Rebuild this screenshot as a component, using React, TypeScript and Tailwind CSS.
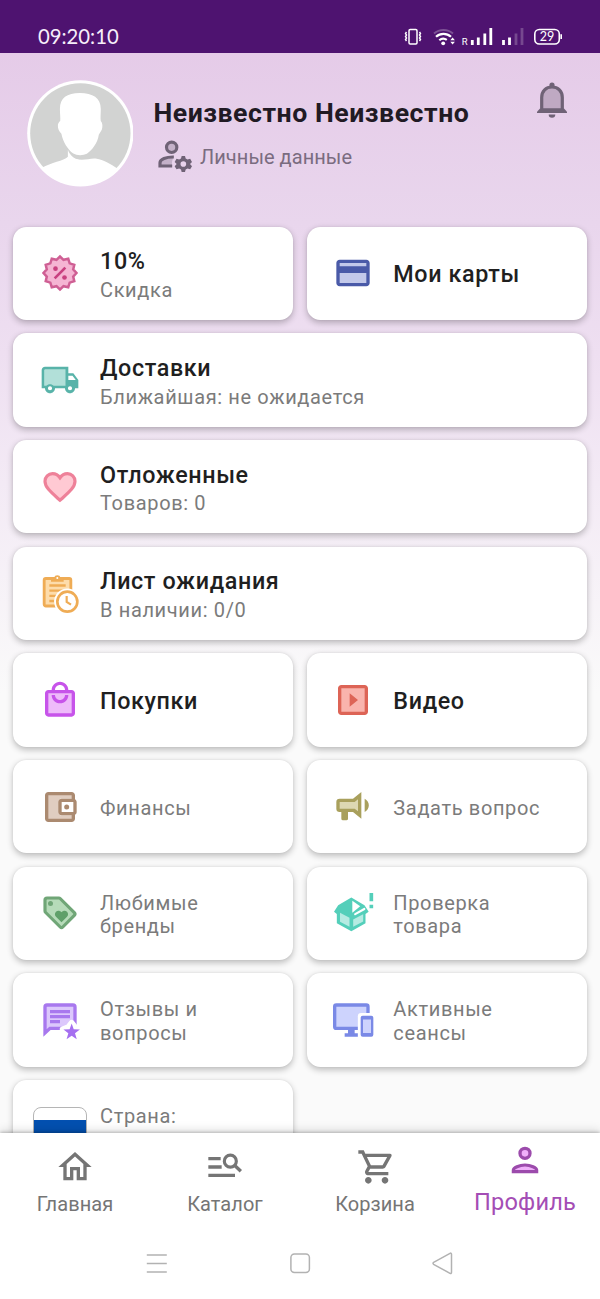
import type { ReactNode } from 'react';

type IconProps = { children: ReactNode; className?: string };

function Icon({ children, className = '' }: IconProps) {
  return (
    <svg viewBox="0 0 24 24" className={`h-10 w-10 shrink-0 overflow-visible ${className}`}>
      {children}
    </svg>
  );
}

function starPoints(cx: number, cy: number, tips: number, outer: number, inner: number, start: number) {
  return Array.from({ length: tips * 2 }, (_, i) => {
    const r = i % 2 ? inner : outer;
    const a = start + (i * Math.PI) / tips;
    return `${(cx + r * Math.cos(a)).toFixed(2)},${(cy + r * Math.sin(a)).toFixed(2)}`;
  }).join(' ');
}

const DiscountIcon = () => (
  <Icon>
    <polygon points={starPoints(12, 12, 12, 9.9, 8.2, 0)} fill="#f5b5d3" stroke="#cf5f94" strokeWidth="1.5" />
    <path d="M8.800 15.200l6.400-6.400" stroke="#c9407f" strokeWidth="1.600" />
    <circle cx="9.3" cy="9.4" r="1.4" fill="#c9407f" />
    <circle cx="14.7" cy="14.7" r="1.4" fill="#c9407f" />
  </Icon>
);

const CardIcon = () => (
  <Icon>
    <rect x="3" y="5" width="18" height="14" fill="#c3c9ea" />
    <path
      fill="#4a5aa8"
      d="M20 4H4c-1.11 0-1.99.89-1.99 2L2 18c0 1.11.89 2 2 2h16c1.11 0 2-.89 2-2V6c0-1.11-.89-2-2-2zm0 14H4v-6h16v6zm0-10H4V6h16v2z"
    />
  </Icon>
);

const TruckIcon = () => (
  <Icon>
    <path fill="#b2e0d9" d="M2 5h14v11H2z" />
    <path
      fill="#58b3a9"
      d="M20 8h-3V4H3c-1.1 0-2 .9-2 2v11h2c0 1.66 1.34 3 3 3s3-1.34 3-3h6c0 1.66 1.34 3 3 3s3-1.34 3-3h2v-5l-3-4zM3 5.500h12.300v10H8.220c-.55-.61-1.33-1-2.220-1s-1.670.39-2.220 1H2.500V6zm3 12.500c-.55 0-1-.45-1-1s.45-1 1-1 1 .45 1 1-.45 1-1 1zm12 0c-.55 0-1-.45-1-1s.45-1 1-1 1 .45 1 1-.45 1-1 1zm-1-6V9.500h2.500l1.960 2.500H17z"
    />
    <circle cx="6" cy="17" r="1.200" fill="#fff" />
    <circle cx="18" cy="17" r="1.200" fill="#fff" />
  </Icon>
);

const HeartIcon = () => (
  <Icon>
    <path
      fill="#ffc9d3"
      stroke="#ee8199"
      strokeWidth="1.9"
      d="M12 19.950l-1.200-1.050C6.200 14.800 3 12 3 8.500 3 6 5 4 7.500 4c1.750 0 3.500.99 4.500 2.450C13 4.990 14.750 4 16.500 4 19 4 21 6 21 8.500c0 3.500-3.200 6.300-7.800 10.400z"
    />
  </Icon>
);

const WaitlistIcon = () => (
  <Icon>
    <rect x="2.5" y="3.300" width="16" height="16.500" rx="1" fill="#fddcab" stroke="#efac55" strokeWidth="1.7" />
    <path d="M6.600 5.200V2.800h1.800a2.100 2.100 0 0 1 4 0h1.800v2.400z" fill="#efac55" />
    <circle cx="10.400" cy="3" r=".6" fill="#fff" />
    <path d="M5.600 7.500h9.800M5.600 10.600h9.800M5.600 13.700h4.400M5.600 16.800h2.800" stroke="#efac55" strokeWidth="1.400" />
    <circle cx="16.400" cy="17.200" r="7.900" fill="#fff" />
    <circle cx="16.400" cy="17.200" r="6" fill="#fff" stroke="#efac55" strokeWidth="1.600" />
    <path d="M16 13.800v3.500l2.600 1.700" fill="none" stroke="#efac55" strokeWidth="1.300" />
  </Icon>
);

const BagIcon = () => (
  <Icon>
    <path fill="#eebbfa" d="M4 7h16v14H4z" />
    <path
      fill="#c754ea"
      d="M19 6h-2c0-2.760-2.240-5-5-5S7 3.240 7 6H5c-1.100 0-1.990.9-1.990 2L3 20c0 1.100.9 2 2 2h14c1.100 0 2-.9 2-2V8c0-1.100-.9-2-2-2zm-7-3c1.660 0 3 1.340 3 3H9c0-1.660 1.340-3 3-3zm7 17H5V8h14v12zm-7-8c-1.660 0-3-1.340-3-3H7c0 2.760 2.240 5 5 5s5-2.240 5-5h-2c0 1.660-1.340 3-3 3z"
    />
  </Icon>
);

const VideoIcon = () => (
  <Icon>
    <rect x="4" y="4" width="16" height="16" fill="#f9b4ad" />
    <path
      fill="#dd6456"
      d="M10 8v8l5-4-5-4zm9-5H5c-1.100 0-2 .9-2 2v14c0 1.100.9 2 2 2h14c1.100 0 2-.9 2-2V5c0-1.100-.9-2-2-2zm0 16H5V5h14v14z"
    />
  </Icon>
);

const WalletIcon = () => (
  <Icon>
    <path fill="#e0cdc0" d="M4 4h16v3h-8v10h8v3H4z" />
    <path
      fill="#ab8a70"
      d="M21 7.280V5c0-1.100-.9-2-2-2H5c-1.110 0-2 .9-2 2v14c0 1.100.89 2 2 2h14c1.100 0 2-.9 2-2v-2.280c.59-.35 1-.98 1-1.720V9c0-.74-.41-1.370-1-1.720zM20 9v6h-7V9h7zM5 19V5h14v2h-6c-1.100 0-2 .9-2 2v6c0 1.100.9 2 2 2h6v2H5z"
    />
    <circle cx="16" cy="12" r="1.500" fill="#ab8a70" />
  </Icon>
);

const MegaphoneIcon = () => (
  <Icon>
    <g transform="translate(0 -1)">
      <path fill="#ddd8b2" d="M3 9h10l3-2v10l-3-2H3z" />
      <path
        fill="#a9a05c"
        d="M12 8H4a2 2 0 0 0-2 2v4a2 2 0 0 0 2 2h1v4a1 1 0 0 0 1 1h2a1 1 0 0 0 1-1v-4h3l5 4V4l-5 4m3 7.600L13 14H4v-4h9l2-1.600v7.200m6.500-3.600c0 1.710-.96 3.260-2.500 4V8c1.530.75 2.500 2.300 2.500 4z"
      />
    </g>
  </Icon>
);

const TagIcon = () => (
  <Icon>
    <path
      d="M3 4.200C3 3.500 3.500 3 4.200 3h7.100c.3 0 .6.100.8.300l8.500 8.500c.5.500.5 1.100 0 1.600l-6.900 7c-.5.500-1.100.500-1.600 0l-8.700-8.700c-.3-.3-.4-.6-.4-.9z"
      fill="#b6dbb9"
      stroke="#70a677"
      strokeWidth="1.900"
    />
    <circle cx="6.300" cy="6.300" r="1.500" fill="#70a677" />
    <path
      fill="#5fa069"
      d="M12.900 17.600l-3.300-3.300c-.8-.9-.9-2.200 0-3.100.9-.9 2.300-.8 3.300.3 1-1.100 2.400-1.200 3.300-.3.900.9.800 2.200 0 3.100z"
    />
  </Icon>
);

const InspectIcon = () => (
  <Icon>
    <path d="M11 2.700l7.900 4.600 2.500 4-1.900 1.300v5.600L11 22.900l-8.700-4.700v-5.600L.600 11.300l2.500-4z" fill="#54cfba" />
    <path d="M4.200 11.900l5.700 2.900v5.500l-5.700-3z" fill="#b5ebe2" />
    <path d="M12.100 17.800v-1.900l6-3.100v4.300l-6 3.200z" fill="#b5ebe2" />
    <path d="M11.600 4.600l4.700 3.300-4.700 3.900z" fill="#fff" />
    <path d="M13.300 12.700l5.500-3.100" stroke="#fff" strokeWidth="1.300" strokeLinecap="round" />
    <path d="M23 0v4.900M23 7v2.200" stroke="#54cfba" strokeWidth="2.200" />
  </Icon>
);

const ReviewsIcon = () => (
  <Icon>
    <path
      d="M3 4.200C3 3.500 3.500 3 4.200 3h15.600c.7 0 1.200.5 1.200 1.200V17H6l-3 2.800z"
      fill="#dcc8fc"
      stroke="#a878ee"
      strokeWidth="2"
    />
    <path d="M6 7h12M6 10h12M6 13h6" stroke="#a878ee" strokeWidth="1.900" />
    <polygon
      points={starPoints(19, 19.300, 5, 5.600, 3.600, -Math.PI / 2)}
      fill="#fff"
      stroke="#fff"
      strokeWidth="3.500"
      strokeLinejoin="round"
    />
    <polygon points={starPoints(19, 19.300, 5, 5.200, 2.100, -Math.PI / 2)} fill="#a56ff0" />
  </Icon>
);

const DevicesIcon = () => (
  <Icon>
    <rect x="1" y="3" width="20" height="14" rx="1" fill="#cdd3fd" stroke="#7a89e6" strokeWidth="2" />
    <path d="M9 17.500h4V20h2v2H7v-2h2z" fill="#7a89e6" />
    <rect x="14.900" y="7.800" width="10.800" height="16" rx="2" fill="#fff" />
    <rect x="17.300" y="10.200" width="6.200" height="11.200" rx=".5" fill="#cdd3fd" stroke="#7a89e6" strokeWidth="1.400" />
    <path d="M17 11h7M17 20.500h7" stroke="#7a89e6" strokeWidth="1.400" />
  </Icon>
);

const FlagIcon = () => (
  <div className="-ml-[6.700px] flex h-10 w-[53.400px] shrink-0 flex-col overflow-hidden rounded-lg border border-[#b5b5b5] bg-white">
    <div className="h-[12.500px]" />
    <div className="-mx-px h-[13.400px] bg-[#0350b0]" />
    <div className="-mx-px flex-1 bg-[#d52b1e]" />
  </div>
);

type Tile = {
  icon: ReactNode;
  title?: string;
  lines?: string[];
  wide?: boolean;
};

const tiles: Tile[] = [
  { icon: <DiscountIcon />, title: '10%', lines: ['Скидка'] },
  { icon: <CardIcon />, title: 'Мои карты' },
  { icon: <TruckIcon />, title: 'Доставки', lines: ['Ближайшая: не ожидается'], wide: true },
  { icon: <HeartIcon />, title: 'Отложенные', lines: ['Товаров: 0'], wide: true },
  { icon: <WaitlistIcon />, title: 'Лист ожидания', lines: ['В наличии: 0/0'], wide: true },
  { icon: <BagIcon />, title: 'Покупки' },
  { icon: <VideoIcon />, title: 'Видео' },
  { icon: <WalletIcon />, lines: ['Финансы'] },
  { icon: <MegaphoneIcon />, lines: ['Задать вопрос'] },
  { icon: <TagIcon />, lines: ['Любимые', 'бренды'] },
  { icon: <InspectIcon />, lines: ['Проверка', 'товара'] },
  { icon: <ReviewsIcon />, lines: ['Отзывы и', 'вопросы'] },
  { icon: <DevicesIcon />, lines: ['Активные', 'сеансы'] },
  { icon: <FlagIcon />, lines: ['Страна:', '\u00a0'] },
];

function TileCard({ icon, title, lines, wide }: Tile) {
  return (
    <div
      className={`flex h-[93.340px] items-center rounded-[13.300px] bg-white pl-[26.700px] shadow-[0_2.500px_6px_rgba(0,0,0,0.24),0_0_2px_rgba(0,0,0,0.08)] ${wide ? 'col-span-2' : ''}`}
    >
      <div className="w-10 shrink-0">{icon}</div>
      <div className={`ml-5 flex flex-col whitespace-nowrap ${title && lines ? 'pt-1' : 'pt-[3.500px]'}`}>
        {title && (
          <span className="text-[23.330px] leading-[27.300px] font-medium tracking-[0.620px] text-[#1f1f1f]">{title}</span>
        )}
        <div className={title && lines ? 'mt-[3.500px]' : ''}>
          {lines?.map((line) => (
            <div key={line} className="text-[20px] leading-[23.440px] tracking-[0.640px] text-[#7b7b7b]">
              {line}
            </div>
          ))}
        </div>
      </div>
    </div>
  );
}

function StatusBar() {
  return (
    <header className="flex h-[53.300px] shrink-0 items-start justify-between bg-[#4e1370] pt-6 pr-9 pl-[38px]">
      <span className="font-['Lato',sans-serif] text-[20.300px] leading-[25px] text-[#f6eefa]">09:20:10</span>
      <svg viewBox="400 24 164 26" className="h-[26px] w-[164px]" fill="none">
        <rect x="409" y="29.500" width="8" height="14.500" rx="1.200" stroke="#fff" strokeWidth="1.500" />
        <path d="M406.500 32l-1 1.500 1 1.500-1 1.500 1 1.500-1 1.500 1 1.500M419.500 32l1 1.500-1 1.500 1 1.500-1 1.500 1 1.500-1 1.500" stroke="#fff" strokeWidth="1.400" />
        <path d="M434 33.500a14.500 14.500 0 0 1 19 0" stroke="#7d5295" strokeWidth="2" />
        <path d="M436 36.800a11 11 0 0 1 15 0M439.300 40.300a6 6 0 0 1 7.500-.4" stroke="#fff" strokeWidth="2.200" />
        <circle cx="443.200" cy="43.300" r="1.900" fill="#fff" />
        <path d="M450.300 40.300l2.300-2.900 2.300 2.900zM450.300 41.700l2.300 2.900 2.300-2.900z" fill="#fff" />
        <text x="461.800" y="45.300" fontSize="9.500" fill="#fff" fontFamily="Roboto, sans-serif">R</text>
        <path d="M472.300 45v-5M478.300 45v-7.500M484.800 45V33.500M490.800 45V28" stroke="#fff" strokeWidth="2.800" />
        <path d="M503.500 45v-5M509.500 45v-7.500" stroke="#fff" strokeWidth="2.800" />
        <path d="M516 45V33.500M522 45V28" stroke="#76488f" strokeWidth="2.800" />
        <rect x="534.800" y="29.500" width="24.500" height="14.500" rx="4.500" stroke="#fff" strokeWidth="1.600" />
        <path d="M561.200 34.200v4.800" stroke="#fff" strokeWidth="1.600" />
        <text x="547" y="41.300" fontSize="12.500" fill="#fff" textAnchor="middle" fontFamily="Lato, sans-serif">29</text>
      </svg>
    </header>
  );
}

function Profile() {
  return (
    <section className="flex h-[173.400px] items-start pt-[26.700px] pl-[26.700px]">
      <svg viewBox="0 0 107 107" className="h-[106.700px] w-[106.700px] shrink-0">
        <defs>
          <clipPath id="avatar">
            <circle cx="53.500" cy="53.500" r="51.500" />
          </clipPath>
        </defs>
        <circle cx="53.500" cy="53.500" r="53.300" fill="#fff" />
        <circle cx="53.500" cy="53.500" r="50.300" fill="#d2d3d2" />
        <g clipPath="url(#avatar)" fill="#fff">
          <path d="M33 29C33 18 40 13 53 13s21 5 21 16c0 5-.5 9 0 12 2 2 2 6 1 9-1 2-2 3-3 5-1 8-7 16-12 19-4 2-10 2-14-.5C41 70 36 62 34.500 54c-2-2-4-5-3.500-9 .3-2 1.500-3.500 2.300-4C33.700 38 33 34 33 29z" />
          <path d="M41 70v7c-4 4-17 6-26 11l5 20h66l5-19c-7-5-15-9-21-10-4-1-10 1-15 1-7 0-12-4-14-10z" />
        </g>
        <path d="M43 72c4 5 10 6 17 3-3 3-5 4-7 4.500-5 0-8-3-10-7.500z" fill="#d2d3d2" />
      </svg>
      <div className="ml-5 flex flex-col pt-[18px]">
        <h1 className="text-[26.670px] leading-[31px] font-bold tracking-[0.530px] whitespace-nowrap text-[#211a24]">
          Неизвестно Неизвестно
        </h1>
        <div className="mt-[5.300px] flex items-center">
          <Icon className="ml-[1.700px]">
            <circle cx="10" cy="8" r="3.100" fill="#c4b1c9" stroke="#6f6276" strokeWidth="1.900" />
            <path d="M3 19.200v-1.700c0-2.300 3.500-3.500 8.300-3.500-1 1.300-1.400 3.300-1 5.200z" fill="#c4b1c9" />
            <path d="M10.300 19.200H3v-1.900c0-2.200 3.600-3.600 8.300-3.500" fill="none" stroke="#6f6276" strokeWidth="1.900" />
            <path
              transform="translate(17 18)"
              fill="#6f6276"
              fillRule="evenodd"
              d="M-1 -4.800h2l.4 1.500 1.100.6 1.600-.4 1.100 1.900-1.200 1.200 1.200 1.300-1.100 1.800-1.600-.4-1.100.6-.4 1.500h-2l-.4-1.500-1.100-.6-1.600.4-1.100-1.800 1.200-1.300-1.200-1.200 1.100-1.900 1.600.4 1.100-.6zM0-1.700a1.700 1.700 0 1 0 0 3.400 1.700 1.700 0 0 0 0-3.400z"
            />
          </Icon>
          <span className="ml-[5px] pt-[6px] text-[20px] leading-[24px] tracking-[0.050px] text-[#7a6c80]">Личные данные</span>
        </div>
      </div>
      <svg viewBox="0 0 30 36" className="mt-[2.300px] mr-[33.300px] ml-auto h-9 w-[30px] shrink-0">
        <circle cx="15" cy="3" r="2.600" fill="#6f6276" />
        <path d="M4.700 28V15.500C4.700 9 9 5 15 5s10.300 4 10.300 10.500V28z" fill="#bfa9c3" stroke="#6f6276" strokeWidth="3.200" />
        <path d="M0 31v-1.300L3 26.500h24l3 3.200V31z" fill="#6f6276" />
        <path d="M11.700 32.500h6.600a3.300 3.300 0 0 1-6.600 0z" fill="#6f6276" />
      </svg>
    </section>
  );
}

const HomeIcon = () => (
  <Icon>
    <path fill="#757575" d="M12 5.690l5 4.500V18h-2v-6H9v6H7v-7.810l5-4.500M12 3L2 12h3v8h6v-6h2v6h6v-8h3L12 3z" />
  </Icon>
);

const CatalogIcon = () => (
  <Icon>
    <path d="M2 7h7.400M2 12h8M2 17h16" stroke="#757575" strokeWidth="2" />
    <circle cx="15.200" cy="8.500" r="3.600" fill="none" stroke="#757575" strokeWidth="1.900" />
    <path d="M17.700 11l3.800 3.600" stroke="#757575" strokeWidth="2" />
  </Icon>
);

const CartIcon = () => (
  <Icon>
    <path
      transform="translate(1 0)"
      fill="#757575"
      d="M15.550 13c.75 0 1.410-.41 1.750-1.030l3.580-6.490c.37-.66-.11-1.480-.87-1.480H5.210l-.94-2H1v2h2l3.600 7.590-1.350 2.440C4.520 15.370 5.480 17 7 17h12v-2H7l1.100-2h7.450zM6.160 6h12.150l-2.760 5H8.530L6.160 6zM7 18c-1.100 0-1.990.9-1.990 2S5.900 22 7 22s2-.9 2-2-.9-2-2-2zm10 0c-1.100 0-1.990.9-1.990 2s.89 2 1.990 2 2-.9 2-2-.9-2-2-2z"
    />
  </Icon>
);

const PersonIcon = () => (
  <Icon>
    <circle cx="12" cy="8" r="3" fill="#f0b0fa" stroke="#9c4bac" strokeWidth="2" />
    <path d="M5 19v-1c0-1.300 3.500-3 7-3s7 1.700 7 3v1z" fill="#f0b0fa" stroke="#9c4bac" strokeWidth="1.900" />
  </Icon>
);

function BottomNav() {
  const items = [
    { label: 'Главная', icon: <HomeIcon /> },
    { label: 'Каталог', icon: <CatalogIcon /> },
    { label: 'Корзина', icon: <CartIcon /> },
  ];
  return (
    <footer className="relative h-[166px] shrink-0 bg-white shadow-[0_-1px_3px_rgba(0,0,0,0.22),0_-3px_9px_rgba(0,0,0,0.12)]">
      <nav className="grid h-[94px] grid-cols-4">
        {items.map(({ label, icon }) => (
          <a key={label} className="flex flex-col items-center pt-[14px]">
            {icon}
            <span className="mt-[4.700px] text-[20px] leading-[24px] tracking-[0.050px] text-[#757575]">{label}</span>
          </a>
        ))}
        <a className="flex flex-col items-center pt-[7.300px]">
          <PersonIcon />
          <span className="mt-[7.500px] text-[23.600px] leading-[28px] tracking-[0.200px] text-[#a44db5]">Профиль</span>
        </a>
      </nav>
      <div className="flex justify-between pt-[24px] pr-[145px] pl-[145px]">
        <svg viewBox="0 0 24 24" className="h-6 w-6" fill="none" stroke="#b2b2b2" strokeWidth="1.500">
          <path d="M1.800 4h20M1.800 12.500h20M1.800 21h20" />
        </svg>
        <svg viewBox="0 0 24 24" className="h-6 w-6" fill="none" stroke="#b2b2b2" strokeWidth="1.500">
          <rect x="2.900" y="3" width="18.500" height="18.500" rx="3.500" />
        </svg>
        <svg viewBox="0 0 24 24" className="h-6 w-6" fill="none" stroke="#b2b2b2" strokeWidth="1.500">
          <path d="M2.600 11.300L19 2.300c1-.5 1.500 0 1.500 1v18c0 1-.5 1.500-1.500 1L2.600 13.300c-.8-.6-.8-1.400 0-2z" />
        </svg>
      </div>
    </footer>
  );
}

export default function App() {
  return (
    <div className="flex h-[1299px] w-[600px] flex-col overflow-hidden bg-[#fafafa] font-['Roboto',sans-serif]">
      <StatusBar />
      <main className="min-h-0 flex-1 overflow-hidden bg-[linear-gradient(180deg,#e5cbe8_0px,#e9d6ed_170px,#eedff1_300px,#f3eaf5_430px,#fafafa_640px)]">
        <Profile />
        <section className="grid grid-cols-2 gap-[13.330px] px-[13.330px]">
          {tiles.map((tile, i) => (
            <TileCard key={i} {...tile} />
          ))}
        </section>
      </main>
      <BottomNav />
    </div>
  );
}
